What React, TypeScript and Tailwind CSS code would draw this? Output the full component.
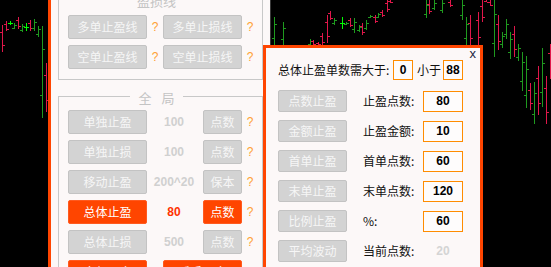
import type { ReactNode } from "react";

const RED = "#e0174a";
const GREEN = "#1f9a1f";
const LIME = "#00ff00";

type Bar = [number, number, number, "r" | "g" | "l"];

const bars: Bar[] = [
  [2, 25, 52, "r"], [6, 21, 31, "r"], [10, 21, 25, "l"], [14, 23, 29, "g"],
  [18, 17, 29, "r"], [22, 24, 32, "g"], [26, 23, 31, "l"], [30, 20, 31, "r"],
  [34, 19, 31, "g"], [38, 26, 37, "g"], [42, 26, 118, "g"], [46, 63, 112, "r"],
  [274, 17, 45, "g"], [283, 22, 45, "g"], [310, 39, 45, "g"], [313, 40, 45, "r"],
  [318, 42, 45, "r"], [322, 33, 45, "r"], [327, 15, 43, "r"], [330, 11, 20, "r"],
  [334, 18, 25, "g"], [342, 17, 29, "l"], [346, 22, 25, "g"], [350, 18, 27, "r"],
  [354, 18, 33, "g"], [359, 25, 32, "g"], [362, 23, 35, "r"], [366, 20, 30, "g"],
  [370, 15, 18, "g"], [375, 15, 23, "r"], [378, 13, 18, "g"], [382, 10, 17, "r"],
  [387, 0, 12, "r"], [390, 0, 3, "r"], [426, 0, 18, "g"], [429, 0, 14, "r"],
  [434, 0, 10, "g"], [442, 0, 13, "g"], [450, 0, 7, "r"], [462, 0, 20, "g"],
  [466, 17, 45, "g"], [470, 15, 45, "r"], [478, 12, 45, "r"], [482, 0, 22, "r"],
  [486, 0, 2, "r"], [490, 0, 6, "r"], [494, 0, 57, "g"], [498, 15, 50, "r"],
  [502, 32, 48, "g"], [506, 19, 39, "g"], [510, 32, 59, "g"], [514, 26, 57, "r"],
  [518, 44, 61, "g"], [522, 52, 91, "g"], [526, 56, 108, "g"], [530, 83, 110, "r"],
  [534, 82, 124, "g"], [538, 66, 115, "r"], [542, 48, 107, "g"], [546, 76, 124, "r"],
  [550, 44, 79, "r"],
];

function Chart() {
  return (
    <svg className="absolute inset-0" width={551} height={267} shapeRendering="crispEdges">
      {bars.map(([x, y1, y2, c], i) => {
        if (c === "l") {
          const m = Math.round((y1 + y2) / 2);
          return (
            <g key={i} stroke={LIME}>
              <line x1={x + 0.5} y1={y1} x2={x + 0.5} y2={y2} />
              <line x1={x - 2} y1={m + 0.5} x2={x + 3} y2={m + 0.5} />
            </g>
          );
        }
        const color = c === "r" ? RED : GREEN;
        const o = y1 + Math.round((y2 - y1) * (c === "g" ? 0.75 : 0.25));
        const cl = y1 + Math.round((y2 - y1) * (c === "g" ? 0.25 : 0.75));
        return (
          <g key={i} stroke={color}>
            <line x1={x + 0.5} y1={y1} x2={x + 0.5} y2={y2} />
            <line x1={x - 2} y1={o + 0.5} x2={x} y2={o + 0.5} />
            <line x1={x + 1} y1={cl + 0.5} x2={x + 3} y2={cl + 0.5} />
          </g>
        );
      })}
    </svg>
  );
}

// gray disabled button / orange active one
const Btn = ({ children, active, className }: { children: ReactNode; active?: boolean; className: string }) => (
  <div
    className={
      "flex items-center justify-center rounded-[2px] border text-[12px] leading-none " +
      (active
        ? "bg-[#ff4500] border-[#ff5a1f] text-white "
        : "bg-[#d3d3d3] border-[#c3c3c3] text-[#f6f6f6] ") +
      className
    }
  >
    {children}
  </div>
);

const Q = () => (
  <span className="w-[16px] text-center text-[12px] leading-none text-[#ffa033] font-['Liberation_Sans',sans-serif]">?</span>
);

const GroupBox = ({ title, className, children }: { title: ReactNode; className: string; children: ReactNode }) => (
  <div className={"relative w-[205px] border border-[#c8c8c8] pl-[9px] " + className}>
    <div className="absolute left-[71px] top-[-8px] w-[53px] h-[16px] bg-[#fcf8f8] flex items-center justify-center text-[13px] leading-none text-[#c4c4c4]">
      {title}
    </div>
    {children}
  </div>
);

const Row = ({ label, value, unit, active, valueClass }: { label: string; value: string; unit: string; active?: boolean; valueClass?: string }) => (
  <div className="flex items-center h-[24px]">
    <Btn active={active} className="w-[79px] h-[24px]">{label}</Btn>
    <span
      className={
        "w-[54px] text-center text-[12px] font-bold font-['Liberation_Sans',sans-serif] " +
        (valueClass ?? "text-[#d0d0d0]")
      }
    >
      {value}
    </span>
    <Btn active={active} className="ml-[2px] w-[39px] h-[24px]">{unit}</Btn>
    <Q />
  </div>
);

const ValBox = ({ children, className }: { children: ReactNode; className: string }) => (
  <div
    className={
      "flex items-center justify-center border border-[#ff8c00] bg-[#fefcfc] text-[12px] font-bold text-black font-['Liberation_Sans',sans-serif] leading-none " +
      className
    }
  >
    {children}
  </div>
);

const PopRow = ({ btn, label, value }: { btn: string; label: string; value?: string }) => (
  <div className="flex items-center h-[22px]">
    <Btn className="w-[69px] h-[22px]">{btn}</Btn>
    <span className="ml-[16px] w-[60px] text-[12px] leading-none text-[#111]">{label}</span>
    {value ? (
      <ValBox className="w-[40px] h-[21px]">{value}</ValBox>
    ) : (
      <span className="w-[40px] text-center text-[12px] font-bold text-[#d4d4d4] font-['Liberation_Sans',sans-serif]">20</span>
    )}
  </div>
);

export default function App() {
  return (
    <div className="relative w-[551px] h-[267px] overflow-hidden bg-black font-['Noto_Sans_CJK_SC','Noto_Sans',sans-serif]">
      <Chart />

      {/* settings panel */}
      <div className="absolute left-[48px] top-[-20px] w-[223px] h-[320px] bg-[#fcf8f8] border-l-[3px] border-l-[#ff4500] border-r border-r-[#3a3a3a] pl-[7px] pt-[19px]">
        <GroupBox title="盈损线" className="h-[81px] pt-[15px]">
          <div className="flex flex-col gap-[6px]">
            <div className="flex items-center">
              <Btn className="w-[79px] h-[24px]">多单止盈线</Btn>
              <Q />
              <Btn className="w-[79px] h-[24px]">多单止损线</Btn>
              <Q />
            </div>
            <div className="flex items-center">
              <Btn className="w-[79px] h-[24px]">空单止盈线</Btn>
              <Q />
              <Btn className="w-[79px] h-[24px]">空单止损线</Btn>
              <Q />
            </div>
          </div>
        </GroupBox>

        <GroupBox
          title={
            <span className="flex gap-[10px]">
              <span>全</span>
              <span>局</span>
            </span>
          }
          className="mt-[16px] h-[200px] pt-[13px]"
        >
          <div className="flex flex-col gap-[6px]">
            <Row label="单独止盈" value="100" unit="点数" />
            <Row label="单独止损" value="100" unit="点数" />
            <Row label="移动止盈" value="200^20" unit="保本" />
            <Row label="总体止盈" value="80" unit="点数" active valueClass="text-[#ff3300]" />
            <Row label="总体止损" value="500" unit="点数" />
            <div className="flex items-center">
              <Btn active className="w-[79px] h-[24px]">全部平仓</Btn>
              <span className="w-[16px]" />
              <Btn active className="w-[79px] h-[24px]">反手开仓</Btn>
            </div>
          </div>
        </GroupBox>
      </div>

      {/* total take-profit popup */}
      <div className="absolute left-[263px] top-[45px] w-[220px] h-[240px] bg-[#fcf8f8] border-[3px] border-[#ff4500] pl-[12px] pt-[12px]">
        <span className="absolute right-[4px] top-[-1px] text-[13px] leading-[13px] text-[#1b2440] font-['Liberation_Sans',sans-serif]">x</span>
        <div className="flex items-center h-[20px] text-[12px] leading-none text-[#111]">
          <span className="w-[115px]">总体止盈单数需大于:</span>
          <ValBox className="w-[20px] h-[20px]">0</ValBox>
          <span className="ml-[4px] w-[26px]">小于</span>
          <ValBox className="w-[20px] h-[20px]">88</ValBox>
        </div>
        <div className="mt-[10px] flex flex-col gap-[8px]">
          <PopRow btn="点数止盈" label="止盈点数:" value="80" />
          <PopRow btn="金额止盈" label="止盈金额:" value="10" />
          <PopRow btn="首单止盈" label="首单点数:" value="60" />
          <PopRow btn="末单止盈" label="末单点数:" value="120" />
          <PopRow btn="比例止盈" label="%:" value="60" />
          <PopRow btn="平均波动" label="当前点数:" />
        </div>
      </div>
    </div>
  );
}
